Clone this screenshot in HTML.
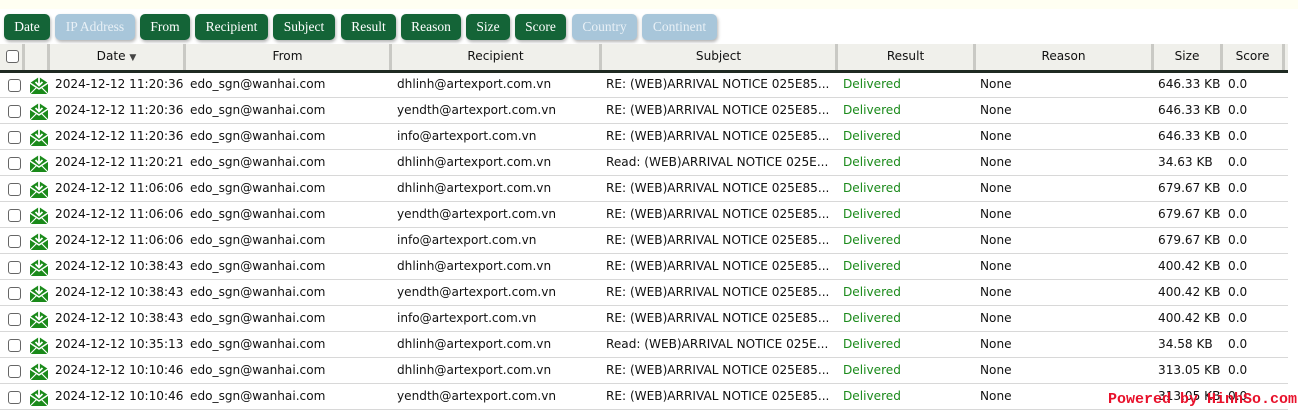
<!DOCTYPE html>
<html><head><meta charset="utf-8"><style>
body{margin:0;width:1298px;height:407px;overflow:hidden;background:#fff;font-family:"DejaVu Sans","Liberation Sans",sans-serif;font-size:12.1px;color:#111;position:relative}
.top{position:absolute;left:0;top:0;width:1298px;height:9px;background:#fffff2}
.b{position:absolute;top:14px;height:26px;line-height:26px;border-radius:5px;background:#146437;color:#fff;font-family:"Liberation Serif",serif;font-size:13.5px;text-align:center;box-shadow:1px 2px 3px rgba(0,0,0,.3)}
.b.d{background:#a8c6da;color:#e8f0f6}
.hd{position:absolute;top:44px;left:0;width:1288px;height:26px;background:#f0f0eb;border-bottom:3px solid #1f2a22}
.hd div{position:absolute;top:0;height:26px;line-height:24px;text-align:center;border-right:3px solid #c9c9c4;box-sizing:border-box;font-size:12.1px}
.r{position:absolute;left:0;width:1288px;height:26px;border-bottom:1px solid #d8d8d8;box-sizing:border-box}
.r span{position:absolute;top:0;line-height:25px;white-space:nowrap}
.cb{position:absolute;width:11px;height:11px;border:1px solid #666;border-radius:3px;background:#fff}
.g{color:#1a8a1a}
.pw{position:absolute;left:1108px;top:391px;font-family:"Liberation Mono",monospace;font-size:15px;font-weight:bold;color:#e8102a}
</style></head><body>
<div class="top"></div>
<div class="b" style="left:4px;width:46px">Date</div>
<div class="b d" style="left:55px;width:80px">IP Address</div>
<div class="b" style="left:140px;width:50px">From</div>
<div class="b" style="left:195px;width:73px">Recipient</div>
<div class="b" style="left:273px;width:62px">Subject</div>
<div class="b" style="left:341px;width:55px">Result</div>
<div class="b" style="left:401px;width:60px">Reason</div>
<div class="b" style="left:466px;width:44px">Size</div>
<div class="b" style="left:515px;width:51px">Score</div>
<div class="b d" style="left:572px;width:65px">Country</div>
<div class="b d" style="left:642px;width:75px">Continent</div>
<div class="hd">
<div style="left:0;width:25px"><span class="cb" style="left:6px;top:6px"></span></div>
<div style="left:25px;width:25px"></div>
<div style="left:50px;width:136px">Date <span style="font-size:9px;color:#444">▼</span></div>
<div style="left:186px;width:206px">From</div>
<div style="left:392px;width:210px">Recipient</div>
<div style="left:602px;width:236px">Subject</div>
<div style="left:838px;width:138px">Result</div>
<div style="left:976px;width:178px">Reason</div>
<div style="left:1154px;width:69px">Size</div>
<div style="left:1223px;width:62px">Score</div>
</div>
<div id="rows"></div>
<script>
var d=[["2024-12-12 11:20:36","dhlinh@artexport.com.vn","RE: (WEB)ARRIVAL NOTICE 025E85...","646.33 KB"],
["2024-12-12 11:20:36","yendth@artexport.com.vn","RE: (WEB)ARRIVAL NOTICE 025E85...","646.33 KB"],
["2024-12-12 11:20:36","info@artexport.com.vn","RE: (WEB)ARRIVAL NOTICE 025E85...","646.33 KB"],
["2024-12-12 11:20:21","dhlinh@artexport.com.vn","Read: (WEB)ARRIVAL NOTICE 025E...","34.63 KB"],
["2024-12-12 11:06:06","dhlinh@artexport.com.vn","RE: (WEB)ARRIVAL NOTICE 025E85...","679.67 KB"],
["2024-12-12 11:06:06","yendth@artexport.com.vn","RE: (WEB)ARRIVAL NOTICE 025E85...","679.67 KB"],
["2024-12-12 11:06:06","info@artexport.com.vn","RE: (WEB)ARRIVAL NOTICE 025E85...","679.67 KB"],
["2024-12-12 10:38:43","dhlinh@artexport.com.vn","RE: (WEB)ARRIVAL NOTICE 025E85...","400.42 KB"],
["2024-12-12 10:38:43","yendth@artexport.com.vn","RE: (WEB)ARRIVAL NOTICE 025E85...","400.42 KB"],
["2024-12-12 10:38:43","info@artexport.com.vn","RE: (WEB)ARRIVAL NOTICE 025E85...","400.42 KB"],
["2024-12-12 10:35:13","dhlinh@artexport.com.vn","Read: (WEB)ARRIVAL NOTICE 025E...","34.58 KB"],
["2024-12-12 10:10:46","dhlinh@artexport.com.vn","RE: (WEB)ARRIVAL NOTICE 025E85...","313.05 KB"],
["2024-12-12 10:10:46","yendth@artexport.com.vn","RE: (WEB)ARRIVAL NOTICE 025E85...","313.05 KB"]];
var h="";
var ic='<svg width="20" height="20" viewBox="0 0 20 20" style="position:absolute;left:29px;top:3px"><path d="M1 8 L10 2 L19 8 V19 H1 Z" fill="#1a8a1a"/><path d="M1 8 L10 14 L19 8" fill="none" stroke="#fff" stroke-width="1.5"/><path d="M1 19 L8 12 M19 19 L12 12" stroke="#fff" stroke-width="1.2"/><path d="M10 2 V10 M6.5 7 L10 10.5 L13.5 7" fill="none" stroke="#fff" stroke-width="1.8"/></svg>';
d.forEach(function(r,i){
h+='<div class="r" style="top:'+(72+i*26)+'px"><span class="cb" style="left:8px;top:7px"></span>'+ic+
'<span style="left:55px">'+r[0]+'</span><span style="left:190px">edo_sgn@wanhai.com</span><span style="left:397px">'+r[1]+'</span><span style="left:606px">'+r[2]+'</span><span class="g" style="left:843px">Delivered</span><span style="left:980px">None</span><span style="left:1158px">'+r[3]+'</span><span style="left:1228px">0.0</span></div>';
});
document.getElementById("rows").innerHTML=h;
</script>
<div class="pw">Powered by HinhSo.com</div>
</body></html>
